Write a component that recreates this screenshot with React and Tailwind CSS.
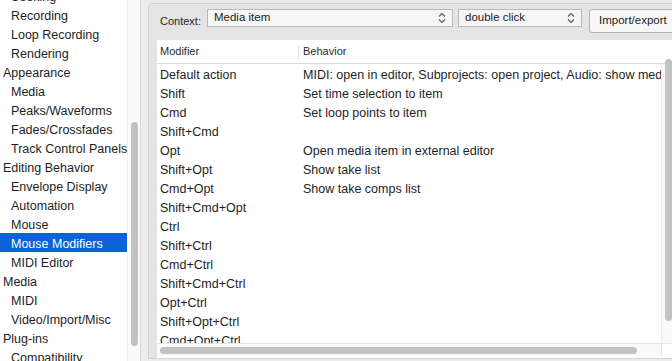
import React from "react";

const sidebar = [
  { t: "Seeking", c: true },
  { t: "Recording", c: true },
  { t: "Loop Recording", c: true },
  { t: "Rendering", c: true },
  { t: "Appearance", c: false },
  { t: "Media", c: true },
  { t: "Peaks/Waveforms", c: true },
  { t: "Fades/Crossfades", c: true },
  { t: "Track Control Panels", c: true },
  { t: "Editing Behavior", c: false },
  { t: "Envelope Display", c: true },
  { t: "Automation", c: true },
  { t: "Mouse", c: true },
  { t: "Mouse Modifiers", c: true, sel: true },
  { t: "MIDI Editor", c: true },
  { t: "Media", c: false },
  { t: "MIDI", c: true },
  { t: "Video/Import/Misc", c: true },
  { t: "Plug-ins", c: false },
  { t: "Compatibility", c: true },
];

const rows = [
  ["Default action", "MIDI: open in editor, Subprojects: open project, Audio: show media item properties"],
  ["Shift", "Set time selection to item"],
  ["Cmd", "Set loop points to item"],
  ["Shift+Cmd", ""],
  ["Opt", "Open media item in external editor"],
  ["Shift+Opt", "Show take list"],
  ["Cmd+Opt", "Show take comps list"],
  ["Shift+Cmd+Opt", ""],
  ["Ctrl", ""],
  ["Shift+Ctrl", ""],
  ["Cmd+Ctrl", ""],
  ["Shift+Cmd+Ctrl", ""],
  ["Opt+Ctrl", ""],
  ["Shift+Opt+Ctrl", ""],
  ["Cmd+Opt+Ctrl", ""],
];

function Chevron() {
  return (
    <svg width="8" height="12" viewBox="0 0 8 12" className="shrink-0">
      <path d="M1 4.5 L4 1.5 L7 4.5" fill="none" stroke="#555" strokeWidth="1.1" />
      <path d="M1 7.5 L4 10.5 L7 7.5" fill="none" stroke="#555" strokeWidth="1.1" />
    </svg>
  );
}

export default function App() {
  return (
    <div
      className="flex w-[672px] h-[361px] overflow-hidden bg-[#ececec] text-[#1e1e1e]"
      style={{ fontFamily: '"Liberation Sans", Arial, sans-serif' }}
    >
      {/* Sidebar */}
      <div className="flex w-[141px] shrink-0 bg-white border-r border-[#d6d6d6] h-full overflow-hidden">
        <div className="w-[127px] shrink-0 overflow-hidden">
          <div className="mt-[-14px] flex flex-col">
            {sidebar.map((s, i) => (
              <div
                key={i}
                className={
                  "relative h-[19px] flex items-center pt-[3px] text-[12.5px] whitespace-nowrap " +
                  (s.c ? "pl-[11px] " : "pl-[3px] ") +
                  (s.sel ? "bg-[#0b63d6] text-white" : "")
                }
              >
                {!s.c && (
                  <span className="absolute left-[-5px] top-[5px] text-[8px] text-[#666]">▾</span>
                )}
                {s.t}
              </div>
            ))}
          </div>
        </div>
        <div className="w-[13px] shrink-0 bg-[#fafafa] border-l border-[#efefef] relative">
          <div className="absolute left-[3px] top-[122px] w-[7px] h-[224px] rounded-full bg-[#c2c2c2]" />
        </div>
      </div>

      {/* Main */}
      <div className="flex-1 pl-[7px] pt-[3px] min-w-0 overflow-hidden">
        <div className="h-[356px] bg-[#e4e4e4] border border-[#d2d2d2] rounded-tl-[5px] border-r-0 pl-[8px] flex flex-col">
          {/* Controls */}
          <div className="h-[36px] flex items-start pt-[5px] shrink-0 whitespace-nowrap">
            <span className="shrink-0 text-[11px] text-[#262626] mt-[4px] ml-[3px] w-[47px]">Context:</span>
            <div className="shrink-0 w-[246px] h-[18px] bg-[#f6f6f6] border border-[#b8b8b8] flex items-center pl-[6px] pr-[6px] justify-between">
              <span className="text-[11.5px] text-[#222]">Media item</span>
              <Chevron />
            </div>
            <div className="shrink-0 ml-[5px] w-[124px] h-[18px] bg-[#f6f6f6] border border-[#b8b8b8] flex items-center pl-[6px] pr-[6px] justify-between">
              <span className="text-[11.5px] text-[#222]">double click</span>
              <Chevron />
            </div>
            <div className="ml-[7px] w-[90px] h-[24px] bg-[#f7f7f7] border border-[#b3b3b3] rounded-[3px] flex items-center pl-[9px] shrink-0">
              <span className="text-[11.5px] text-[#222]">Import/export</span>
            </div>
          </div>

          {/* Table */}
          <div className="flex-1 bg-white flex flex-col min-h-0 relative overflow-hidden">
            <div className="h-[24px] flex items-center border-b border-[#dcdcdc] shrink-0 text-[11px] text-[#2a2a2a]">
              <div className="w-[142px] pl-[3px] border-r border-[#e2e2e2] h-[14px] flex items-center">Modifier</div>
              <div className="pl-[4px]">Behavior</div>
            </div>
            <div className="flex-1 flex min-h-0">
              <div className="w-[504px] shrink-0 overflow-hidden">
                {rows.map(([m, b], i) => (
                  <div key={i} className="h-[19px] flex items-center pt-[4px] text-[12.5px] whitespace-nowrap">
                    <div className="w-[146px] pl-[3px] shrink-0">{m}</div>
                    <div>{b}</div>
                  </div>
                ))}
              </div>
              <div className="w-[12px] shrink-0 bg-[#fafafa] border-l border-[#ebebeb] relative">
                <div className="absolute left-[3px] top-[-5px] w-[7px] h-[262px] rounded-full bg-[#c2c2c2]" />
              </div>
            </div>
            <div className="h-[13px] shrink-0 flex border-t border-[#e6e6e6] mb-[2px]">
              <div className="w-[504px] bg-[#fafafa] relative">
                <div className="absolute left-[3px] top-[3px] w-[477px] h-[7px] rounded-full bg-[#c2c2c2]" />
              </div>
              <div className="flex-1 bg-white border-l border-[#e6e6e6]" />
            </div>
          </div>
        </div>
      </div>
    </div>
  );
}
